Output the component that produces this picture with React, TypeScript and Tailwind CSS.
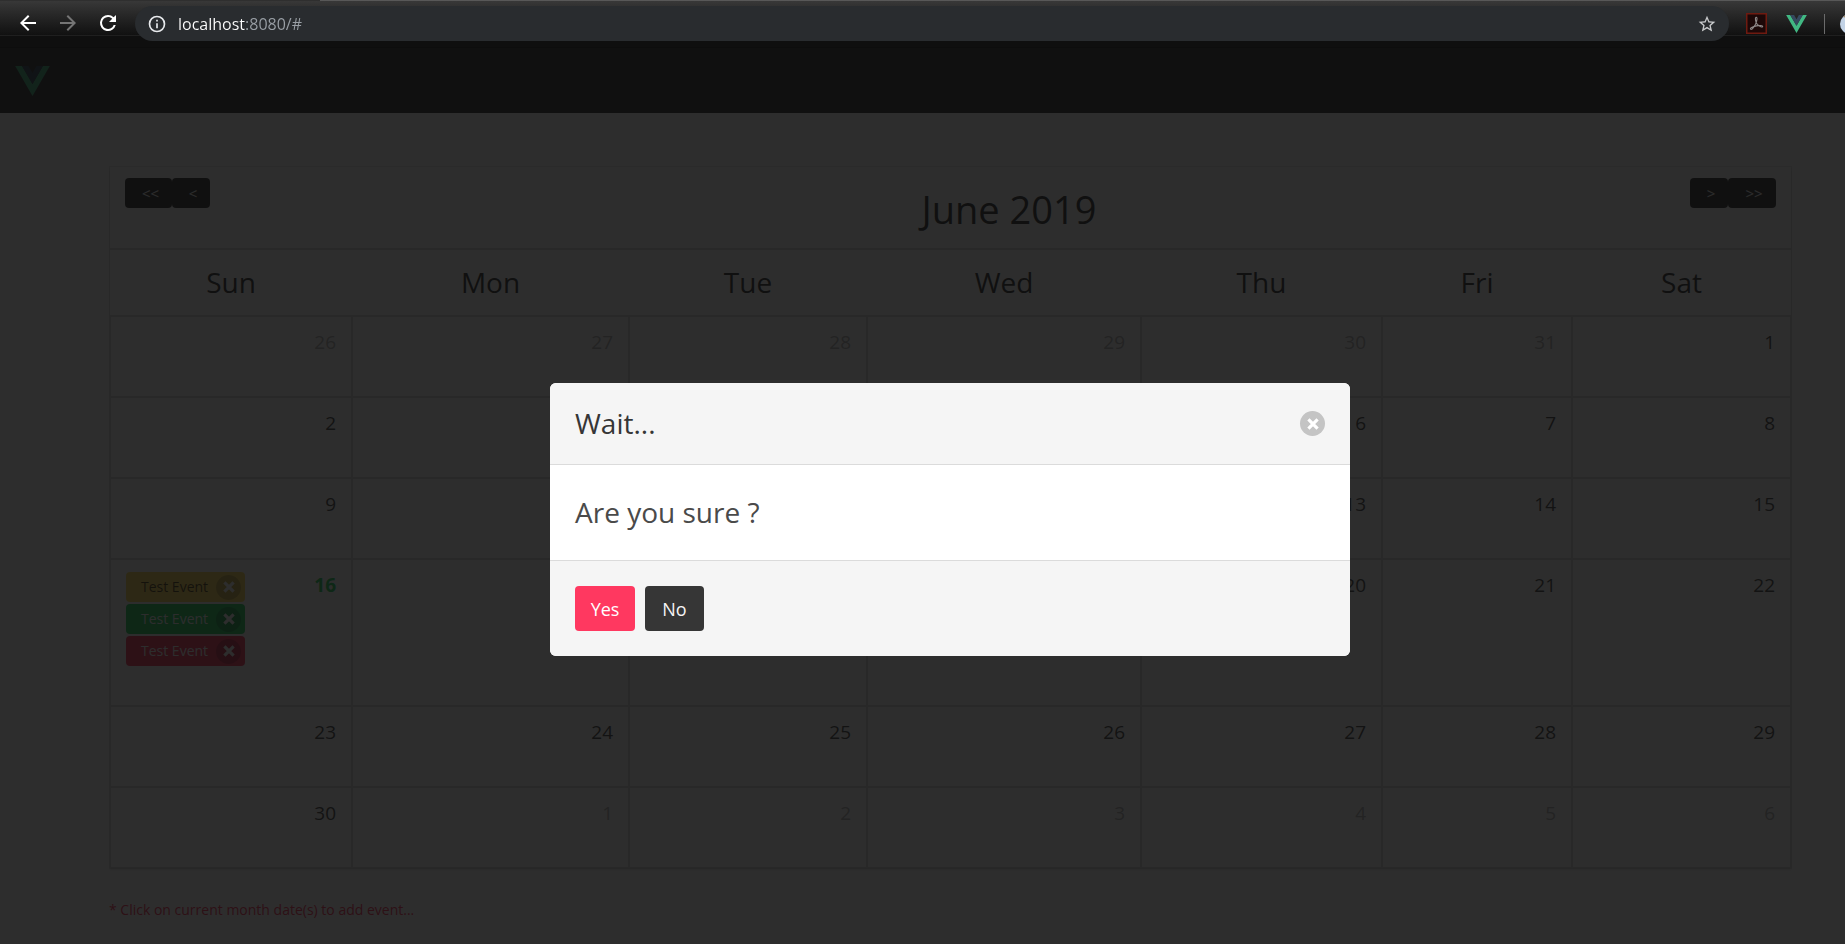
import React from "react";

type Day = { n: number; muted?: boolean; today?: boolean };

const columns = [
  { name: "Sun", width: "w-[242px]" },
  { name: "Mon", width: "w-[277px]" },
  { name: "Tue", width: "w-[238px]" },
  { name: "Wed", width: "w-[274px]" },
  { name: "Thu", width: "w-[241px]" },
  { name: "Fri", width: "w-[190px]" },
  { name: "Sat", width: "w-[219px]" },
];

const days: Day[] = [
  ...[26, 27, 28, 29, 30, 31].map((n) => ({ n, muted: true })),
  ...Array.from({ length: 30 }, (_, i) => ({ n: i + 1, today: i + 1 === 16 })),
  ...[1, 2, 3, 4, 5, 6].map((n) => ({ n, muted: true })),
];
const weeks = Array.from({ length: 6 }, (_, w) => days.slice(w * 7, w * 7 + 7));

const events = [
  { id: 1, title: "Test Event", tone: "bg-[#ffdd57] text-black/70" },
  { id: 2, title: "Test Event", tone: "bg-[#23d160] text-white" },
  { id: 3, title: "Test Event", tone: "bg-[#ff3860] text-white" },
];

function VueLogo({ className, outer, inner }: { className: string; outer: string; inner: string }) {
  return (
    <svg viewBox="0 0 196 170" className={className} aria-hidden="true">
      <path fill={outer} d="M0 0l98 170L196 0h-39.2L98 101.5 38.7 0z" />
      <path fill={inner} d="M38.7 0L98 102l58.8-102h-36.3L98 39.2 75 0z" />
    </svg>
  );
}

function DeleteButton({ label, tone }: { label: string; tone: string }) {
  return (
    <button aria-label={label} className={`flex size-[25px] shrink-0 items-center justify-center rounded-full ${tone}`}>
      <svg viewBox="0 0 12 12" className="size-3" aria-hidden="true">
        <path d="M1.4 1.4l9.2 9.2M10.6 1.4l-9.2 9.2" stroke="#fff" strokeWidth="3.2" />
      </svg>
    </button>
  );
}

function Toolbar() {
  return (
    <header className="relative z-20 bg-[#0a0a0a]">
      <div className="flex h-px">
        <div className="w-[320px] bg-[#2f2f2f]" />
        <div className="flex-1 bg-[#585858]" />
      </div>
      <div className="flex h-[35px] items-start overflow-visible border-b border-[#1f1f1f] bg-linear-to-b from-[#383838] to-[#111] pl-4">
        <div className="mt-[10px] flex items-center gap-4 text-white">
          <button aria-label="Back" className="size-6">
            <svg viewBox="0 0 24 24" className="size-6" fill="currentColor"><path d="M20 11H7.8l5.6-5.6L12 4l-8 8 8 8 1.4-1.4L7.8 13H20z" /></svg>
          </button>
          <button aria-label="Forward" className="size-6 text-[#757575]">
            <svg viewBox="0 0 24 24" className="size-6" fill="currentColor"><path d="M4 11h12.2l-5.6-5.6L12 4l8 8-8 8-1.4-1.4 5.6-5.6H4z" /></svg>
          </button>
          <button aria-label="Reload" className="size-6">
            <svg viewBox="0 0 24 24" className="size-6" fill="currentColor"><path d="M17.65 6.35A7.96 7.96 0 0 0 12 4a8 8 0 1 0 7.73 10h-2.08A6 6 0 1 1 12 6c1.66 0 3.14.69 4.22 1.78L13 11h7V4z" /></svg>
          </button>
        </div>
        <div className="mt-[5px] ml-[15px] flex h-[35px] flex-1 items-center rounded-full bg-[#292c2f] px-3">
          <svg viewBox="0 0 24 24" className="size-5 shrink-0 text-[#e8eaed]" fill="currentColor"><path d="M11 7h2v2h-2zm0 4h2v6h-2zm1-9a10 10 0 1 0 0 20 10 10 0 0 0 0-20zm0 18a8 8 0 1 1 0-16 8 8 0 0 1 0 16z" /></svg>
          <input
            aria-label="Address"
            defaultValue="localhost:8080/#"
            className="ml-[11px] h-6 min-w-0 flex-1 bg-[linear-gradient(90deg,#fff_67px,#9aa0a6_67px)] bg-clip-text text-base text-transparent outline-none"
          />
          <button aria-label="Bookmark" className="size-5 shrink-0 text-[#c8cacc]">
            <svg viewBox="0 0 24 24" className="size-5" fill="currentColor"><path d="M22 9.24l-7.19-.62L12 2 9.19 8.63 2 9.24l5.46 4.73L5.82 21 12 17.27 18.18 21l-1.63-7.03zM12 15.4l-3.76 2.27 1-4.28-3.32-2.88 4.38-.38L12 6.1l1.71 4.04 4.38.38-3.32 2.88 1 4.28z" /></svg>
          </button>
        </div>
        <div className="mt-3 flex h-[21px] w-[116px] shrink-0 items-center overflow-hidden pl-[17px]">
          <svg viewBox="0 0 21 21" className="size-[21px] shrink-0" aria-hidden="true">
            <rect x="0.75" y="0.75" width="19.5" height="19.5" fill="#1c0808" stroke="#6e1a10" strokeWidth="1.5" />
            <path d="M4.6 16.2c-.9-1 1.7-2.4 5.900-3.300 3.300-.7 6.200-.5 6.200.6 0 1.300-3.300.2-5.400-2.100C9.600 9.400 9 5.900 9.700 4.600c.6-.9 1.500-.1 1.300 1.500-.3 2.500-2.400 7.300-4.300 9.300-.8.9-1.600 1.400-2.100.8z" fill="none" stroke="#8c8585" strokeWidth="1.1" />
          </svg>
          <VueLogo className="ml-[19px] h-[18px] w-[21px] shrink-0" outer="#41b883" inner="#35495e" />
          <div className="ml-[17px] h-5 w-px shrink-0 bg-[#6b6b6b]" />
          <svg viewBox="0 0 20 20" className="ml-[15px] size-5 shrink-0" aria-hidden="true">
            <circle cx="10" cy="10" r="10" fill="#c3d3e6" />
            <path d="M3 3a10 10 0 0 1 14 0l-7 2z" fill="#a98d68" />
          </svg>
        </div>
      </div>
    </header>
  );
}

const navButton = "flex h-[30px] items-center justify-center rounded bg-[#363636] pt-px text-[15px] text-[#f5f5f5]";

function Calendar() {
  return (
    <section className="mt-[54px] mr-[54px] ml-[110px] shadow-[0_2px_3px_rgba(10,10,10,0.1),0_0_0_1px_rgba(10,10,10,0.1)]">
      <div className="flex h-[82px] items-start border-b border-[#dbdbdb] px-[15px] pt-[11px]">
        <div className="flex">
          <button aria-label="Previous year" className={`${navButton} w-[47px] pl-1`}>&lt;&lt;</button>
          <button aria-label="Previous month" className={`${navButton} w-[38px] pl-1`}>&lt;</button>
        </div>
        <h1 className="flex-1 pt-[7px] pl-[118px] text-center text-[38px] leading-[48px] text-[#363636]">June 2019</h1>
        <div className="flex">
          <button aria-label="Next month" className={`${navButton} w-[38px] pl-1`}>&gt;</button>
          <button aria-label="Next year" className={`${navButton} w-12 pl-1`}>&gt;&gt;</button>
        </div>
      </div>
      <table className="w-full table-fixed border-separate border-spacing-0">
        <thead>
          <tr>
            {columns.map((c) => (
              <th key={c.name} className={`${c.width} h-[67px] border-y border-[#dbdbdb] pb-[2px] text-[28px] leading-9 font-normal text-[#363636]`}>
                {c.name}
              </th>
            ))}
          </tr>
        </thead>
        <tbody>
          {weeks.map((week, w) => (
            <tr key={w} className={w === 3 ? "h-[147px]" : "h-[81px]"}>
              {week.map((day, d) => (
                <td key={d} className="border border-[#dbdbdb] px-[15px] pt-[10px] align-top">
                  <div className="flex items-start justify-between">
                    <div className="flex flex-col gap-[2px] pt-[2px]">
                      {day.today &&
                        events.map((e) => (
                          <div key={e.id} className={`flex h-[30px] w-[119px] items-center justify-between rounded pr-1 pl-[15px] text-sm ${e.tone}`}>
                            {e.title}
                            <DeleteButton label="Remove event" tone="bg-[#0a0a0a]/20" />
                          </div>
                        ))}
                    </div>
                    <span className={`text-[19px] leading-[30px] ${day.today ? "font-bold text-[#23d160]" : day.muted ? "text-[#b5b5b5]" : "text-[#4a4a4a]"}`}>
                      {day.n}
                    </span>
                  </div>
                </td>
              ))}
            </tr>
          ))}
        </tbody>
      </table>
    </section>
  );
}

function ConfirmDialog() {
  return (
    <div className="absolute inset-0 z-10 flex items-center justify-center bg-[#0a0a0a]/86 pt-[59px] pl-[55px]">
      <div role="dialog" aria-modal="true" aria-labelledby="dialog-title" className="w-[800px] overflow-hidden rounded-md bg-white">
        <div className="flex items-center justify-between border-b border-[#dbdbdb] bg-[#f5f5f5] px-[25px] py-[22px]">
          <h2 id="dialog-title" className="text-[28px] leading-[37px] text-[#363636]">Wait...</h2>
          <DeleteButton label="Close" tone="bg-[#c4c4c4]" />
        </div>
        <p className="px-[25px] py-[29px] text-[28px] leading-[37px] text-[#4a4a4a]">Are you sure ?</p>
        <div className="flex gap-[10px] border-t border-[#dbdbdb] bg-[#f5f5f5] p-[25px]">
          <button className="h-[45px] w-[60px] rounded bg-[#ff3860] text-lg text-white">Yes</button>
          <button className="h-[45px] w-[59px] rounded bg-[#363636] text-lg text-[#f5f5f5]">No</button>
        </div>
      </div>
    </div>
  );
}

export default function App() {
  return (
    <div className="flex min-h-screen flex-col bg-white font-['Open_Sans','Noto_Sans',sans-serif]">
      <Toolbar />
      <main className="relative flex-1">
        <div className="h-3 border-b border-[#222] bg-[#2b2b2b]" />
        <nav className="flex h-[65px] items-center bg-[#363636] px-[15px]">
          <a href="#" aria-label="Home">
            <VueLogo className="h-[30px] w-[35px]" outer="#41b883" inner="#35495e" />
          </a>
        </nav>
        <Calendar />
        <p className="mt-[30px] ml-[109px] pb-5 text-sm leading-6 text-[#ff3860]">* Click on current month date(s) to add event...</p>
        <ConfirmDialog />
      </main>
    </div>
  );
}
